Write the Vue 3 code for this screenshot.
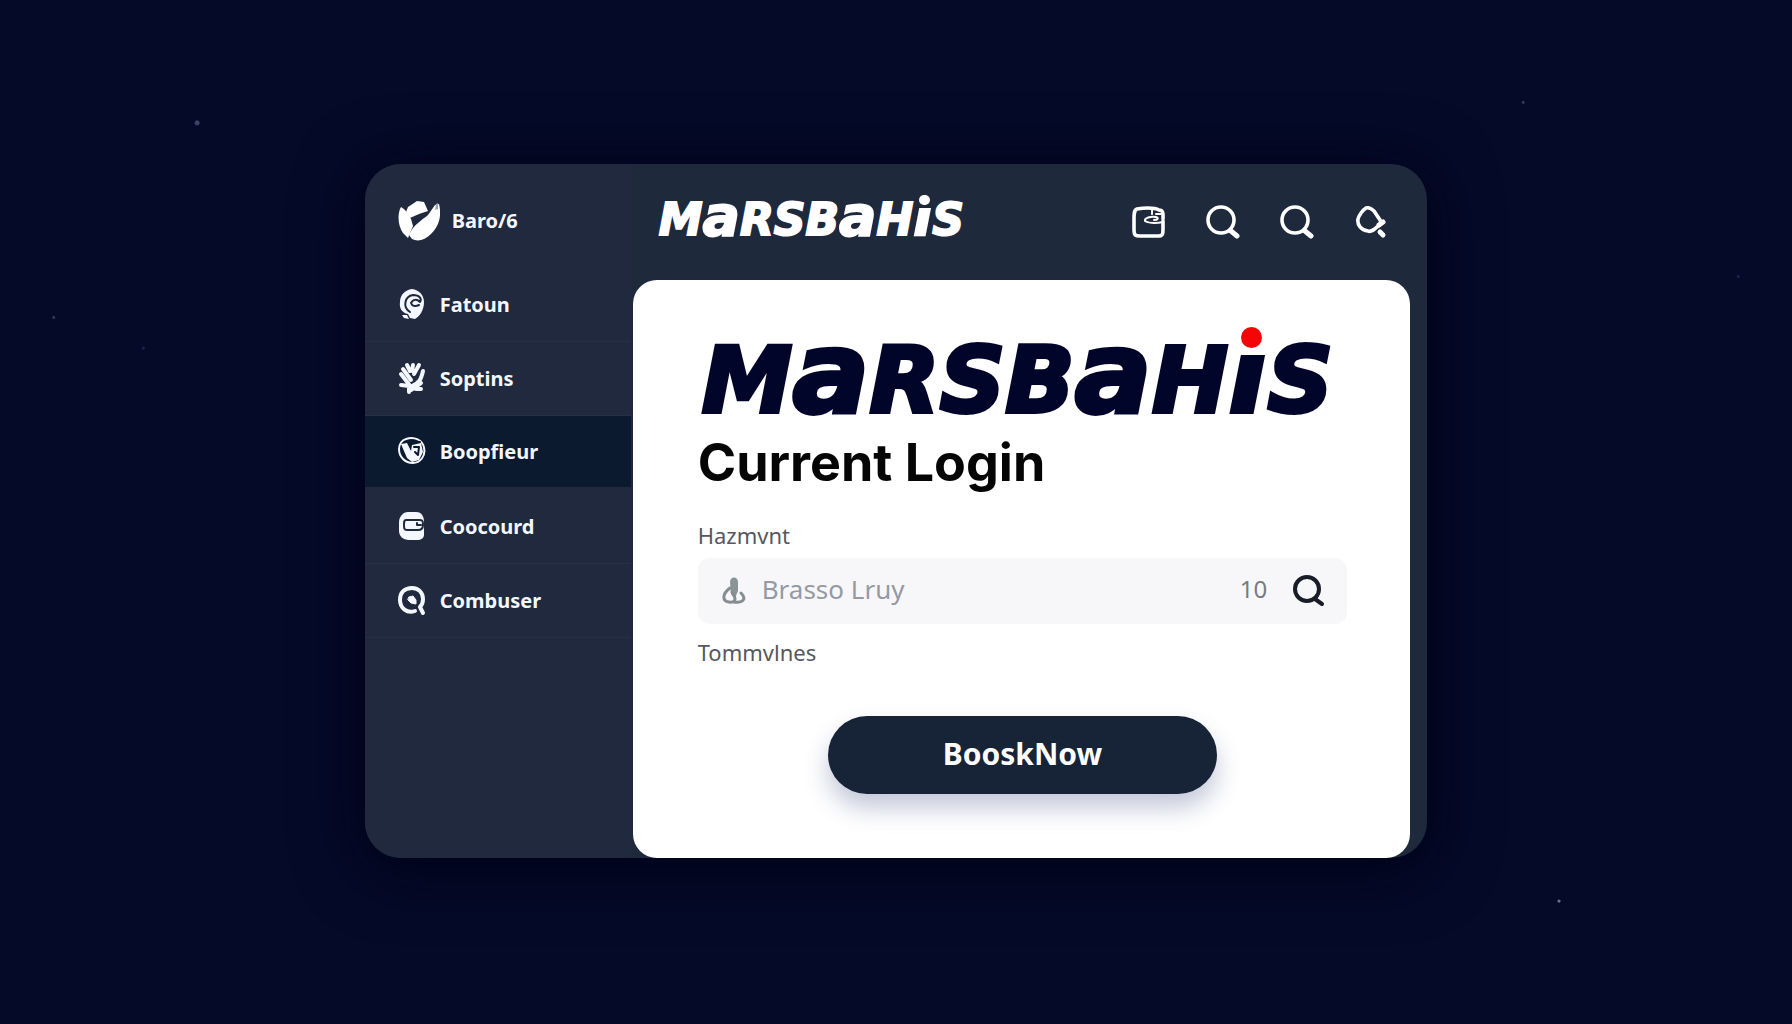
<template>
  <div class="page">
    <div class="card">
      <!-- sidebar -->
      <aside class="sidebar">
        <a href="#" class="brand">
          <svg class="brand-icon" viewBox="0 0 42 42" aria-hidden="true">
            <path fill="#fff" d="M10 7l9-6 7 1 4 9-9 3-9 4-4-6z" />
            <path fill="#fff" d="M3 7c4 2 7 7 10 12l2 7-5 12-5-5C0 26-1 14 3 7z" />
            <path fill="#fff" d="M37 5l4-1c3 12 0 22-8 30-6 6-13 8-19 5l-3-4c4-10 13-15 19-20z" />
            <path fill="#9aa3b2" d="M38 4l2-1v6l-3 1z" />
          </svg>
          <span>Baro/6</span>
        </a>
        <nav class="menu">
          <a
            v-for="item in menuItems"
            :key="item.label"
            href="#"
            class="menu-item"
            :class="{ 'menu-item--active': item.label === activeItem }"
            @click.prevent="activeItem = item.label"
          >
            <svg class="menu-icon" viewBox="0 0 28 32" aria-hidden="true">
              <path
                v-for="(shape, i) in item.shapes"
                :key="i"
                :d="shape.d"
                :fill="shape.fill || 'none'"
                :stroke="shape.stroke || 'none'"
                :stroke-width="shape.width || 3"
                stroke-linecap="round"
                stroke-linejoin="round"
              />
            </svg>
            <span>{{ item.label }}</span>
          </a>
        </nav>
      </aside>

      <!-- main column -->
      <div class="main">
        <header class="topbar">
          <div class="logo logo--small">
            M<span class="tall">a</span>RSB<span class="tall">a</span>H<span class="dotted"><span class="stem">i</span></span>S
          </div>
          <div class="actions">
            <button type="button" class="icon-button" aria-label="Calendar">
              <svg viewBox="0 0 34 34">
                <path d="M27 5C22 2 10 3 5 4 2 5 2 9 2 14v11c0 5 1 6 6 6h18c5 0 5-2 5-7v-8M27 5c5 0 4 5 4 9" />
                <path class="thin" d="M20 4v5M31 17c-4 1-13 2-18-1-1-3 6-5 11-4 3 1 2 3-2 3M24 9h5" />
              </svg>
            </button>
            <button type="button" class="icon-button" aria-label="Search">
              <svg viewBox="0 0 34 34">
                <circle cx="15" cy="15" r="13" />
                <path class="bold" d="M25 26l6 5" />
              </svg>
            </button>
            <button type="button" class="icon-button" aria-label="Find">
              <svg viewBox="0 0 34 34">
                <circle cx="15" cy="15" r="13" />
                <path class="bold" d="M25 26l6 5" />
              </svg>
            </button>
            <button type="button" class="icon-button" aria-label="More">
              <svg viewBox="0 0 34 34">
                <path d="M12 3c3-1 6 1 8 3l6 9c2 3 0 5-3 7-3 3-7 5-9 4-7-1-11-6-10-12 1-4 5-9 8-11z" />
                <path class="bold" d="M25 20l4-3M26 27l3 3" />
              </svg>
            </button>
          </div>
        </header>

        <main class="panel">
          <div class="logo logo--large">
            M<span class="tall">a</span>RSB<span class="tall">a</span>H<span class="dotted"><span class="stem">i</span></span>S
          </div>
          <h1 class="title">Current Login</h1>

          <form class="form" @submit.prevent>
            <label for="account" class="label">Hazmvnt</label>
            <div class="field">
              <svg class="field-icon" viewBox="0 0 24 28" aria-hidden="true">
                <path fill="#8a9496" d="M8 5c0-6 8-6 8 0v9l-3 7-4-4z" />
                <path
                  fill="none"
                  stroke="#858d92"
                  stroke-width="3"
                  stroke-linecap="round"
                  d="M8 11c-8 6-8 13-1 14 6 1 7-3 5-6l-2-4M19 16c6 6 2 10-7 9"
                />
              </svg>
              <input id="account" v-model="account" type="text" class="input" placeholder="Brasso Lruy" />
              <span class="count">10</span>
              <button type="submit" class="field-button" aria-label="Search">
                <svg viewBox="0 0 32 32">
                  <circle cx="14" cy="14" r="12" />
                  <path d="M22 24l7 5" />
                </svg>
              </button>
            </div>
            <p class="label hint">Tommvlnes</p>
            <button type="submit" class="submit">BooskNow</button>
          </form>
        </main>
      </div>
    </div>
  </div>
</template>

<script setup>
import { ref } from 'vue'

const light = '#f4f7ff'
const dark = '#1f293d'

const account = ref('')
const activeItem = ref('Boopfieur')

const menuItems = [
  {
    label: 'Fatoun',
    shapes: [
      { d: 'M14 1c7 1 12 6 12 13 0 8-4 14-9 17l-5-1-2-4C4 25 1 20 2 14 2 7 7 2 14 1z', fill: light },
      { d: 'M12 24C4 19 7 8 15 7c7 0 9 4 7 7-3-3-7-3-9 1 1 3 4 4 8 2', stroke: dark, width: 2 },
      { d: 'M4 27h5l2 4-5-1z', fill: light }
    ]
  },
  {
    label: 'Soptins',
    shapes: [
      { d: 'M3 12l10 13M5 7l8 11M9 3l3 6M15 3l-1 6M21 3l-5 9M25 9c-2 9-4 12-11 15M13 28l10-7M3 23l8 1v6M18 27h5', stroke: light, width: 4 }
    ]
  },
  {
    label: 'Boopfieur',
    shapes: [
      { d: 'M8 4c8-3 17 1 18 9 2 8-4 15-11 15C7 28 1 22 1 14 1 9 4 5 8 4z', stroke: light, width: 2 },
      { d: 'M3 9l6-1 4 8 1-6 9-2 2 9-4 8-7 2-5-4z', fill: light },
      { d: 'M9 6l13 1M16 12h5l-1 8-3-3', stroke: '#0b1a2f', width: 2 }
    ]
  },
  {
    label: 'Coocourd',
    shapes: [
      { d: 'M10 2h8c6 0 8 5 8 10v13c0 3-3 5-7 5h-8c-6 0-10-4-10-9v-9c0-5 4-10 9-10z', fill: light },
      { d: 'M8 10h14c3 0 3 2 3 5s-2 5-5 5H9c-3 0-3-2-3-5s0-5 2-5zM19 13v2h4', stroke: dark, width: 2 }
    ]
  },
  {
    label: 'Combuser',
    shapes: [
      { d: 'M17 27C9 30 2 24 2 16S7 4 14 4s11 5 11 11c0 4-1 6-3 8l3 6', stroke: light, width: 4 },
      { d: 'M11 13l4-1 3 4v4l-5-1-3-3z', fill: light, stroke: light, width: 1 }
    ]
  }
]
</script>

<style>
body {
  background: #040a28;
}
</style>

<style scoped>
.page {
  min-height: 100vh;
  box-sizing: border-box;
  padding: 24px 0 27px;
  display: flex;
  align-items: center;
  justify-content: center;
  font-family: 'Noto Sans', 'Liberation Sans', sans-serif;
  background:
    radial-gradient(circle at 11% 12%, #3a4361 2px, transparent 3px),
    radial-gradient(circle at 85% 10%, #303958 1px, transparent 2px),
    radial-gradient(circle at 3% 31%, #303958 1px, transparent 2px),
    radial-gradient(circle at 8% 34%, #1b2444 1px, transparent 2px),
    radial-gradient(circle at 97% 27%, #1b2444 1px, transparent 2px),
    radial-gradient(circle at 87% 88%, #69718a 1px, transparent 2px),
    #040a28;
}

.card {
  width: 59.3%;
  min-width: 960px;
  display: grid;
  grid-template-columns: 266px 1fr;
  background: #1e293c;
  border-radius: 36px;
  overflow: hidden;
  box-shadow: 0 8px 60px 10px #00031b;
}

.sidebar {
  background: #20293d;
}

.brand {
  height: 104px;
  box-sizing: border-box;
  padding: 10px 0 0 33px;
  display: flex;
  align-items: center;
  gap: 12px;
  color: #f4f7ff;
  font-size: 20px;
  font-weight: 700;
  text-decoration: none;
}

.brand-icon {
  width: 42px;
  height: 42px;
}

.menu-item {
  height: 74px;
  box-sizing: border-box;
  padding-left: 33px;
  display: flex;
  align-items: center;
  gap: 14px;
  border-bottom: 1px solid #263146;
  background-clip: padding-box;
  color: #f4f7ff;
  font-size: 20px;
  font-weight: 700;
  text-decoration: none;
}

.menu-item--active {
  border-bottom: 3px solid transparent;
  background-color: #0b1a2f;
}

.menu-icon {
  width: 28px;
  height: 32px;
}

.main {
  display: flex;
  flex-direction: column;
}

.topbar {
  height: 116px;
  box-sizing: border-box;
  padding: 0 39px 0 28px;
  display: flex;
  align-items: center;
  justify-content: space-between;
}

/* wordmark: every letter is drawn at capital height */
.logo {
  font-family: 'DejaVu Sans', sans-serif;
  font-weight: 700;
  font-style: italic;
  line-height: 1;
  white-space: nowrap;
  color: var(--ink);
  -webkit-text-stroke: var(--stroke) var(--ink);
}

.logo--small {
  font-size: 44px;
  --ink: #fff;
  --dot: #fff;
  --stroke: 2px;
}

.logo--large {
  height: 92px;
  padding-left: 4px;
  font-size: 91px;
  --ink: #02052a;
  --dot: #f50505;
  --stroke: 4px;
}

.tall,
.dotted {
  font-size: 126%;
  line-height: 0;
}

.dotted {
  position: relative;
  display: inline-block;
  line-height: 1;
  margin-top: -30%;
}

/* hides the glyph's own square dot, the round one sits on top */
.stem {
  display: inline-block;
  mask-image: linear-gradient(transparent 34%, #000 34%);
}

.dotted::after {
  content: '';
  position: absolute;
  left: 32%;
  top: 10%;
  width: 54%;
  aspect-ratio: 1;
  border-radius: 50%;
  background: var(--dot);
}

.actions {
  display: flex;
  gap: 40px;
}

.icon-button,
.field-button {
  padding: 0;
  border: none;
  background: none;
  cursor: pointer;
}

.icon-button svg {
  display: block;
  width: 34px;
  height: 34px;
  fill: none;
  stroke: #fff;
  stroke-width: 3.6;
  stroke-linecap: round;
}

.icon-button .bold {
  stroke-width: 5;
}

.icon-button .thin {
  stroke-width: 2;
}

.panel {
  flex: 1;
  margin: 0 17px 0 2px;
  padding: 55px 63px 64px 65px;
  background: #fff;
  border-radius: 24px;
}

.title {
  margin: 4px 0 0;
  font-family: Inter, 'Noto Sans', sans-serif;
  font-size: 52px;
  line-height: 64px;
  font-weight: 700;
  color: #050505;
}

.form {
  display: flex;
  flex-direction: column;
}

.label {
  margin: 26px 0 9px;
  font-size: 22px;
  line-height: 28px;
  color: #55585f;
}

.field {
  height: 66px;
  box-sizing: border-box;
  padding: 0 22px 0 24px;
  display: flex;
  align-items: center;
  gap: 16px;
  background: #f7f7fa;
  border-radius: 12px;
}

.field-icon {
  width: 24px;
  height: 28px;
}

.input {
  flex: 1;
  min-width: 0;
  padding: 0 0 4px;
  border: none;
  outline: none;
  background: none;
  font-family: inherit;
  font-size: 26px;
  color: #55585f;
}

.input::placeholder {
  color: #959aa2;
  opacity: 1;
}

.count {
  margin-right: 10px;
  padding-bottom: 4px;
  font-size: 24px;
  color: #777b80;
}

.field-button svg {
  display: block;
  width: 32px;
  height: 32px;
  fill: none;
  stroke: #191d27;
  stroke-width: 4;
  stroke-linecap: round;
}

.hint {
  margin: 14px 0 0;
}

.submit {
  width: 60%;
  height: 78px;
  margin: 50px auto 0;
  padding-bottom: 4px;
  border: none;
  border-radius: 39px;
  background: #172438;
  box-shadow: 0 14px 24px rgba(60, 72, 130, 0.3);
  color: #fff;
  font-family: inherit;
  font-size: 30px;
  font-weight: 700;
  cursor: pointer;
}
</style>
